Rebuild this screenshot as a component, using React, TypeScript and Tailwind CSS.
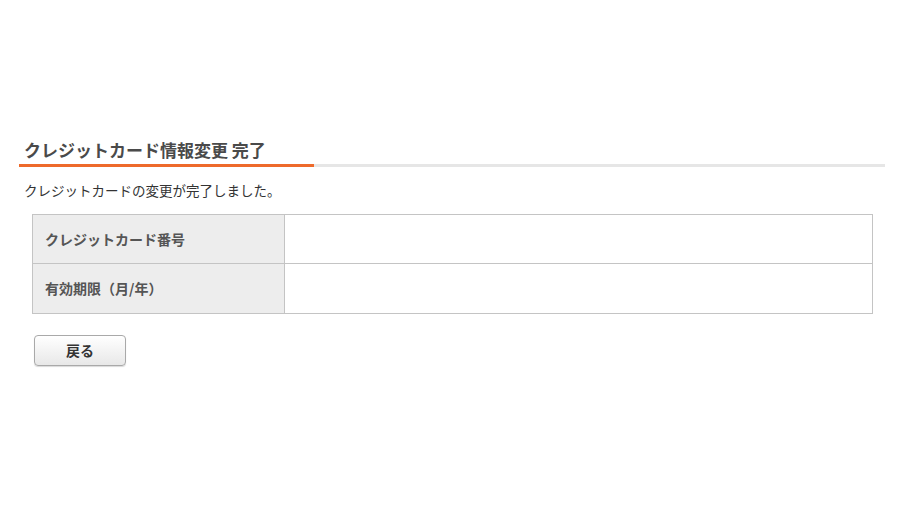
import React from "react";

const font = { fontFamily: '"Noto Sans CJK JP", "Noto Sans", sans-serif' };

export default function App() {
  return (
    <div className="w-[900px] h-[506px] bg-white text-[#333]" style={font}>
      <div className="pt-[134px] pl-[19px] pr-[15px]">
        <div className="pl-[5px] h-[30px] flex items-center">
          <h1 className="text-[17px] font-bold text-[#4a4a4a] leading-none">
            クレジットカード情報変更 完了
          </h1>
        </div>
        <div className="flex h-[3px]">
          <div className="w-[295px] bg-[#ee6a2b]" />
          <div className="flex-1 bg-[#e6e6e6]" />
        </div>
        <p className="pl-[5px] mt-[14px] text-[13.5px] leading-[18px] text-[#333]">
          クレジットカードの変更が完了しました。
        </p>
        <div className="pl-[13px] pr-[12px] mt-[15px]">
          <table className="w-full border-collapse border border-[#c4c4c4]">
            <tbody>
              <tr className="h-[49px]">
                <th className="w-[252px] bg-[#ededed] border border-[#c4c4c4] text-left pl-[12px] text-[14px] font-bold text-[#555]">
                  クレジットカード番号
                </th>
                <td className="border border-[#c4c4c4]" />
              </tr>
              <tr className="h-[50px]">
                <th className="w-[252px] bg-[#ededed] border border-[#c4c4c4] text-left pl-[12px] text-[14px] font-bold text-[#555]">
                  有効期限（月/年）
                </th>
                <td className="border border-[#c4c4c4]" />
              </tr>
            </tbody>
          </table>
        </div>
        <div className="pl-[15px] mt-[21px]">
          <button className="w-[92px] h-[31px] rounded-[4px] border border-[#a9a9a9] bg-gradient-to-b from-[#ffffff] to-[#e8e8e8] text-[14px] font-bold text-[#333] shadow-[0_1px_1px_rgba(0,0,0,0.15)]">
            戻る
          </button>
        </div>
      </div>
    </div>
  );
}
